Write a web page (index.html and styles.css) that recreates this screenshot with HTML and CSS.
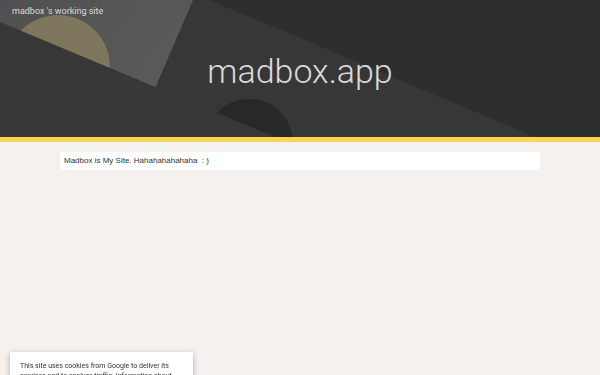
FILE: index.html
```html
<!DOCTYPE html>
<html lang="en">
<head>
    <meta charset="UTF-8">
    <meta name="viewport" content="width=device-width, initial-scale=1.0">
    <title>madbox.app</title>
    <link rel="stylesheet" href="styles.css">
</head>
<body>
    <header class="site-header">
        <svg class="header-art" viewBox="0 0 600 137" preserveAspectRatio="none" aria-hidden="true">
            <defs>
                <linearGradient id="lightArea" x1="0" y1="0" x2="1" y2="0.4">
                    <stop offset="0" stop-color="#505050"/>
                    <stop offset="1" stop-color="#5a5a5a"/>
                </linearGradient>
            </defs>
            <rect width="600" height="137" fill="#2e2e2e"/>
            <polygon points="0,0 210,0 535,137 0,137" fill="#373737"/>
            <polygon points="0,0 193,0 150,100 0,100" fill="url(#lightArea)"/>
            <circle cx="58" cy="67" r="52" fill="#7e775d"/>
            <circle cx="249" cy="143" r="44" fill="#282828"/>
            <polygon points="0,22 275,137 0,137" fill="#383838"/>
        </svg>
        <div class="site-name">madbox 's working site</div>
        <h1 class="site-title">madbox.app</h1>
    </header>

    <main class="page">
        <div class="post-box">Madbox is My Site. Hahahahahahaha&nbsp; : )</div>
    </main>

    <div class="cookie-notice">
        <p>This site uses cookies from Google to deliver its services and to analyze traffic. Information about your use of this site is shared with Google. By using this site, you agree to its use of cookies.</p>
        <div class="cookie-actions">
            <a href="#">Learn More</a>
            <a href="#">Ok</a>
        </div>
    </div>
</body>
</html>
```

FILE: styles.css
```css
body {
    margin: 0;
    background-color: #f4f1ee;
    font-family: Roboto, "Liberation Sans", Arial, sans-serif;
}
.site-header {
    position: relative;
    height: 142px;
    box-sizing: border-box;
    padding: 5px 12px 0;
    border-bottom: 5px solid #fdd34f;
    overflow: hidden;
}
.header-art {
    position: absolute;
    top: 0;
    left: 0;
    width: 100%;
    height: 137px;
}
.site-name {
    position: relative;
    font-size: 9px;
    line-height: 12px;
    color: #dcdcdc;
}
.site-title {
    position: relative;
    margin: 32px 0 0;
    text-align: center;
    font-family: "Roboto Light", Roboto, sans-serif;
    font-size: 34px;
    line-height: 44px;
    font-weight: 300;
    color: #dadada;
}
.page {
    padding-top: 10px;
}
.post-box {
    width: 472px;
    margin: 0 auto;
    padding: 0 4px;
    height: 18px;
    background-color: #fff;
    font-family: "Liberation Sans", Arial, sans-serif;
    font-size: 8px;
    line-height: 18px;
    color: #333;
}
.cookie-notice {
    position: fixed;
    top: 352px;
    left: 10px;
    width: 163px;
    padding: 9px 10px 10px;
    background-color: #fff;
    box-shadow: 0 2px 6px rgba(0, 0, 0, 0.3);
    font-size: 7px;
    line-height: 10px;
    color: #333;
}
.cookie-notice p {
    margin: 0;
}
.cookie-actions {
    text-align: right;
    margin-top: 8px;
}
.cookie-actions a {
    color: #e8a200;
    text-decoration: none;
    text-transform: uppercase;
    margin-left: 10px;
}
```
